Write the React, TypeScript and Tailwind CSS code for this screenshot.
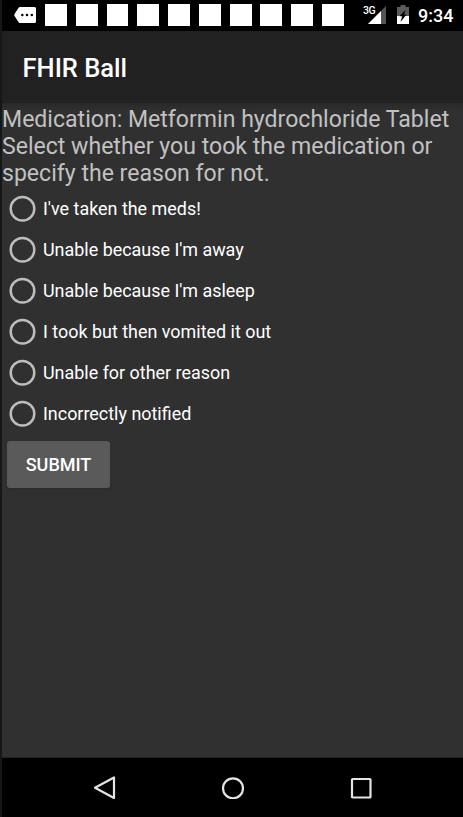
const notifications = Array.from({ length: 10 }, (_, i) => i);

const reasons = [
  "I've taken the meds!",
  "Unable because I'm away",
  "Unable because I'm asleep",
  "I took but then vomited it out",
  "Unable for other reason",
  "Incorrectly notified",
];

function StatusBar() {
  return (
    <div className="flex h-[31px] shrink-0 items-start bg-black pl-3">
      <svg className="mt-[7px] h-4 w-[22px] shrink-0" viewBox="0 0 22 16">
        <path d="M6 0H20.5Q22 0 22 1.5V14.5Q22 16 20.5 16H6Q5 16 4.4 15L.4 8.8Q0 8 .4 7.2L4.4 1Q5 0 6 0Z" fill="#fff" />
        <g fill="#000">
          <circle cx="8.3" cy="8" r="1.25" />
          <circle cx="13" cy="8" r="1.25" />
          <circle cx="17.8" cy="8" r="1.25" />
        </g>
      </svg>
      <div className="mt-1 ml-[9px] flex w-[299px] shrink-0 gap-[8.95px]">
        {notifications.map((n) => (
          <div key={n} className="h-[22px] w-[21.85px] shrink-0 bg-white" />
        ))}
      </div>
      <span className="mt-[5px] ml-[19px] w-3 shrink-0 text-[10.5px] leading-[12px] font-medium tracking-[-0.5px]">3G</span>
      <svg className="mt-1.5 -ml-[7px] h-[18px] w-[18px] shrink-0" viewBox="0 0 18 18">
        <path d="M18 0V18H0Z" fill="#555" />
        <path d="M13 5V18H0Z" fill="#fff" />
      </svg>
      <svg className="mt-[5px] ml-[11px] h-[19px] w-3 shrink-0" viewBox="0 0 12 19">
        <path d="M3.5 0H8.5V2H12V19H0V2H3.5Z" fill="#5c5c5c" />
        <path d="M0 11H12V19H0Z" fill="#fff" />
        <path d="M8.8 4.8L2.4 11.3H5.2L3.4 17L9.6 9.5H7Z" fill="#000" />
      </svg>
      <span className="mt-[5px] ml-[9px] text-[18px] leading-[22px] font-medium">9:34</span>
    </div>
  );
}

function NavigationBar() {
  return (
    <div className="flex h-[59px] shrink-0 items-start bg-black pt-[17px] pl-[91px]">
      <svg className="h-6 w-6" viewBox="0 0 24 24" fill="none" stroke="#e4e4e4" strokeWidth="2.2" strokeLinejoin="round">
        <path d="M21 2.5V23L2 12.7Z" />
      </svg>
      <svg className="ml-[104px] h-6 w-6" viewBox="0 0 24 24" fill="none" stroke="#e4e4e4" strokeWidth="2.2">
        <circle cx="12" cy="13.3" r="10" />
      </svg>
      <svg className="ml-[104px] h-6 w-6" viewBox="0 0 24 24" fill="none" stroke="#e4e4e4" strokeWidth="2.2" strokeLinejoin="round">
        <rect x="3" y="4" width="18.5" height="18.5" rx=".6" />
      </svg>
    </div>
  );
}

export default function App() {
  return (
    <div className="flex h-[817px] w-[463px] flex-col overflow-hidden border-l-2 border-[#171717] bg-[#303030] font-['Roboto',sans-serif] text-white">
      <StatusBar />
      <header className="flex h-[72px] shrink-0 items-center bg-[#212121] pt-0.5 pl-[20.5px]">
        <h1 className="text-[25.5px] leading-8 font-medium">FHIR Ball</h1>
      </header>
      <main className="flex-1 border-b border-[#242424] bg-linear-to-b from-[#292929] to-[#303030] to-[8px]">
        <p className="pt-[3px] text-[23.07px] leading-[27px] whitespace-nowrap text-[#c1c1c1]">
          Medication: Metformin hydrochloride Tablet
          <br />
          Select whether you took the medication or
          <br />
          specify the reason for not.
        </p>
        <div className="mt-px">
          {reasons.map((reason) => (
            <label key={reason} className="flex h-[41px] items-center pl-[7px]">
              <input type="radio" name="reason" className="peer sr-only" />
              <svg className="-mt-px h-[27px] w-[27px] shrink-0" viewBox="0 0 27 27" fill="none">
                <circle cx="13.5" cy="13.7" r="11.8" stroke="#bdbdbd" strokeWidth="2.5" />
              </svg>
              <span className="ml-[7px] text-[17.93px] leading-6 whitespace-nowrap">{reason}</span>
            </label>
          ))}
        </div>
        <button className="mt-[7px] ml-[5px] h-[47px] w-[103px] rounded-[3px] bg-[#5a5a5b] text-[18px] font-medium shadow-[0_1px_2px_#2a2a2a]">
          SUBMIT
        </button>
      </main>
      <NavigationBar />
    </div>
  );
}
